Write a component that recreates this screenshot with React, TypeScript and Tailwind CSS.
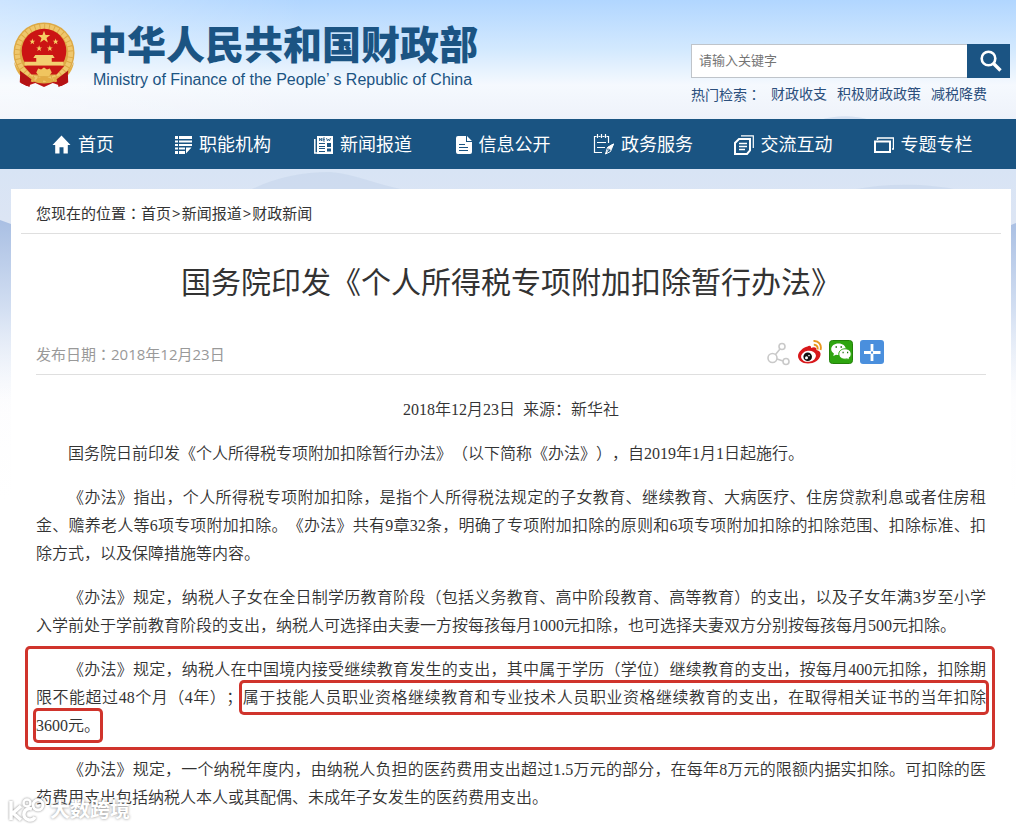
import type { ReactNode } from "react";

const svg = "mt-px shrink-0";

const HomeIcon = () => (
  <svg className={svg} width="19" height="19" viewBox="0 0 19 19" fill="#fff">
    <path d="M9.5 0.5 0.5 10h2.7v8.5h4.3v-6.300h4v6.300h4.300V10h2.700z" />
  </svg>
);

const ListIcon = () => (
  <svg className={svg} width="17" height="18" viewBox="0 0 17 18" fill="#fff">
    <path d="M0 0h3v3H0zM4 0h13v3H4zM0 4.500h3v2H0zM4 4.500h13v2H4zM0 8h3v2H0zM4 8h13v2H4zM0 11.500h3v2H0zM4 11.500h6v2H4zM0 15h3v3H0zM4 15h6v3H4zM11 11.500h5.500L11 17.500z" />
  </svg>
);

const NewsIcon = () => (
  <svg className={svg} width="19" height="18" viewBox="0 0 19 18">
    <path d="M.8 3v14h3" fill="none" stroke="#fff" strokeWidth="1.500" />
    <path d="M3 0h16v18H3z" fill="#fff" />
    <path d="M5.500 5V2l2 3V2M11 2H9v3h2M9 3.500h2M12.500 2l1 3 1-2 1 2 1-3" fill="none" stroke="#1a5482" strokeWidth="0.800" />
    <path d="M5 7.500h6M5 10.500h6M5 12.500h6M5 15.500h6" stroke="#1a5482" strokeWidth="1" />
    <path d="M13 7h4v4h-4zM13 12.500h4v3h-4z" fill="#1a5482" />
  </svg>
);

const FileIcon = () => (
  <svg className={svg} width="16" height="18" viewBox="0 0 16 18">
    <path d="M2 0h8v6h6v10a2 2 0 0 1-2 2H2a2 2 0 0 1-2-2V2a2 2 0 0 1 2-2zM11 0l5 5h-5z" fill="#fff" />
    <path d="M3 8.500h6M3 11.500h9M3 14.500h9" stroke="#1a5482" strokeWidth="1" />
  </svg>
);

const NoteIcon = () => (
  <svg className={svg} width="21" height="21" viewBox="0 0 21 21" fill="none" stroke="#fff">
    <path d="M1 2.500h2.500M5.500 2.500h2M9.500 2.500h2M13.500 2.500h2V9M1.500 2v16.500H9M4.500 0v4M8.500 0v4M12.500 0v4M4 8.500h9M4 13.500h8" strokeWidth="1.200" />
    <path d="M20.500 10l-6 3.500-2 6.500 5-2.500zM12.500 20l3-4.500" strokeWidth="1" />
    <path d="M20.500 10l-6 3.500 3 2z" fill="#fff" />
  </svg>
);

const PagesIcon = () => (
  <svg className={svg} width="20" height="20" viewBox="0 0 20 20" fill="none" stroke="#fff">
    <path d="M7 .8h12.300V13" strokeWidth="1.200" />
    <path d="M5 4h11v11.500L13 19H1V8z" strokeWidth="2" />
    <path d="M5 8.500h8M5 11.500h8M5 14.500h6" strokeWidth="1.500" />
  </svg>
);

const WindowsIcon = () => (
  <svg className={svg} width="20" height="16" viewBox="0 0 20 16" fill="none" stroke="#fff">
    <path d="M3.500 3V1h16v11H18" strokeWidth="1.400" />
    <path d="M1 4.500h15V15H1z" strokeWidth="2" />
  </svg>
);

const Emblem = () => (
  <svg width="64" height="68" viewBox="0 0 66 68" className="shrink-0">
    <path d="M9 44l48 0 1 18-7 4-9-3-9 4-9-4-9 3-7-4z" fill="#bd1416" />
    <circle cx="33" cy="32" r="31.500" fill="#dda945" />
    <circle cx="33" cy="32" r="27.500" fill="none" stroke="#efc76c" strokeWidth="5" strokeDasharray="4 1" />
    <circle cx="33" cy="30" r="23" fill="#cb1414" />
    <path d="M33 9l1.600 4.500h4.800l-3.800 2.900 1.400 4.600-4-2.800-4 2.800 1.400-4.600-3.800-2.900h4.800z" fill="#f6cf63" />
    <path
      d="M21 17l.8 2.200H24l-1.800 1.400.7 2.300-1.900-1.400-1.900 1.400.7-2.300-1.800-1.400h2.200zM45 17l.8 2.200H48l-1.800 1.400.7 2.300-1.900-1.400-1.900 1.400.7-2.300-1.800-1.400h2.200zM28 24l.8 2.200H31l-1.800 1.400.7 2.300-1.900-1.400-1.900 1.400.7-2.300-1.800-1.400h2.200zM39 24l.8 2.200H42l-1.800 1.400.7 2.300-1.900-1.400-1.900 1.400.7-2.300-1.800-1.400h2.200z"
      fill="#f6cf63"
    />
    <path d="M24 34h18l2 3h-3v4h12v4H13v-4h12v-4h-3z" fill="#f3cf70" />
    <path d="M12 45h42L46 54H20z" fill="#c81616" />
    <path d="M2 41c6 12 14 15 22 16l-2 5C12 60 4 54 2 41zM64 41c-6 12-14 15-22 16l2 5c10-2 18-8 20-21z" fill="#e3b04a" />
    <path d="M25 52l2-4 3 1 3-2 3 2 3-1 2 4-3 4H28z" fill="#f0c55f" />
    <path d="M8 50l12 9-2 8-9-4zM58 50l-12 9 2 8 9-4z" fill="#b51214" />
    <path d="M24 60c6-5 12-5 18 0l-5 3-4-3-4 3z" fill="#e3ac45" />
  </svg>
);

const ShareIcon = () => (
  <svg width="24" height="24" viewBox="0 0 24 24" fill="none" stroke="#c9c9c9" strokeWidth="1.600">
    <circle cx="5.500" cy="16" r="4.500" />
    <circle cx="15" cy="4.500" r="3" />
    <circle cx="19" cy="19.500" r="3" />
    <path d="M8.500 12.500L13 7M10 17l6 2" />
  </svg>
);

const WeiboIcon = () => (
  <svg width="24" height="24" viewBox="0 0 24 24">
    <path d="M9.500 6.500C11 5 13.500 5.500 13 8c3-1.300 6-.8 5.500 2 3 .7 4.500 2.500 4 5-.8 5-6.500 8.500-12.500 8.500S0 20 0 16C0 12.500 5 7 9.500 6.500z" fill="#d8181b" />
    <ellipse cx="10.500" cy="16.300" rx="7.500" ry="5.500" fill="#fff" transform="rotate(-8 10.500 16.300)" />
    <circle cx="9.700" cy="16.700" r="4.300" fill="#111" />
    <circle cx="8.500" cy="17.800" r="1.500" fill="#fff" />
    <circle cx="11" cy="15.600" r=".8" fill="#fff" />
    <path d="M15.500 1c5-.5 8.500 4 7 9M15.800 4.800c2.800-.2 4.400 2 3.700 4.700" fill="none" stroke="#e8981f" strokeWidth="1.900" />
  </svg>
);

const WechatIcon = () => (
  <svg width="24" height="24" viewBox="0 0 24 24">
    <rect x=".5" y=".5" width="23" height="23" rx="3" fill="#2ea50f" stroke="#238009" />
    <path d="M9.500 3.500c4.200 0 7.300 2.400 7.300 5.800 0 3.300-3.100 5.700-7.300 5.700-.9 0-1.700-.1-2.500-.3L4.300 16l.6-2.500C3.200 12.400 2.200 11 2.200 9.300c0-3.400 3.100-5.800 7.300-5.800z" fill="#fff" />
    <path d="M16 8.800c3.600 0 6.200 2.300 6.200 5.200 0 1.600-.8 3-2.200 3.900l.6 2.300-2.500-1.300c-.7.200-1.400.3-2.100.3-3.500 0-6.200-2.300-6.200-5.200s2.700-5.200 6.200-5.200z" fill="#fff" stroke="#2ea50f" />
    <path d="M6.500 7h1.500M11.500 7H13M13.500 12.500h1.200M18 12.500h1.200" stroke="#1d6b0a" strokeWidth="1.400" />
  </svg>
);

const PlusIcon = () => (
  <svg width="24" height="24" viewBox="0 0 24 24">
    <rect width="24" height="24" rx="3" fill="#4a8fdd" />
    <path d="M4 12.500h7M13 12.500h7.500M12 4v7.500M12 13.500V21" stroke="#fff" strokeWidth="2.800" />
  </svg>
);

const Sky = () => (
  <svg className="absolute inset-x-0 top-0 -z-10 h-[500px] w-full" viewBox="0 0 1016 500" preserveAspectRatio="none">
    <defs>
      <linearGradient id="sky" x2="0" y2="1">
        <stop offset="0" stopColor="#b1d6ff" />
        <stop offset=".1" stopColor="#d3e9fe" />
        <stop offset=".17" stopColor="#f5f9fe" />
        <stop offset=".22" stopColor="#f0f4fb" />
        <stop offset=".34" stopColor="#d8e4f5" />
        <stop offset=".44" stopColor="#dce5f4" />
        <stop offset=".8" stopColor="#fdfdfe" />
        <stop offset="1" stopColor="#fff" />
      </linearGradient>
      <linearGradient id="glow" x2="1" y2="0">
        <stop offset="0" stopColor="#fff" stopOpacity=".35" />
        <stop offset=".3" stopColor="#fff" stopOpacity="0" />
        <stop offset="1" stopColor="#fff" stopOpacity="0" />
      </linearGradient>
      <linearGradient id="hill" x2="0" y2="1">
        <stop offset="0" stopColor="#a9bfe3" />
        <stop offset=".45" stopColor="#d3dff2" />
        <stop offset="1" stopColor="#fff" stopOpacity="0" />
      </linearGradient>
    </defs>
    <path d="M0 0h1016v500H0z" fill="url(#sky)" />
    <path d="M0 0h1016v120H0z" fill="url(#glow)" />
    <path d="M250 190c25-12 50-18 80-18 25 2 45 12 75 18zM820 120c15-5 35-5 50 0zM850 190c40-8 80-6 110 0z" fill="#c6d5eb" opacity=".6" />
    <path d="M0 220l11 4v196H0zM1011 225l5-2v157h-5z" fill="url(#hill)" />
  </svg>
);

const navItems = [
  { label: "首页", Icon: HomeIcon },
  { label: "职能机构", Icon: ListIcon },
  { label: "新闻报道", Icon: NewsIcon },
  { label: "信息公开", Icon: FileIcon },
  { label: "政务服务", Icon: NoteIcon },
  { label: "交流互动", Icon: PagesIcon },
  { label: "专题专栏", Icon: WindowsIcon },
];

const hotWords = ["财政收支", "积极财政政策", "减税降费"];

// full-width colon, centred in its cell
const Colon = () => <span className="font-['Noto_Sans_CJK_TC',sans-serif]">：</span>;

function Header() {
  return (
    <header className="flex h-[119px] items-start justify-between pl-3 pr-[6px]">
      <div className="flex">
        <div className="pt-[21px]">
          <Emblem />
        </div>
        <div className="pl-3 pt-[18px] text-[#1b5483]">
          <h1 className="whitespace-nowrap font-['Noto_Sans_CJK_SC',sans-serif] text-[39px] font-black leading-[48px]">
            中华人民共和国财政部
          </h1>
          <p className="mt-1 whitespace-nowrap pl-[5px] font-['Liberation_Sans',sans-serif] text-base leading-5">
            Ministry of Finance of the People’ s Republic of China
          </p>
        </div>
      </div>
      <div className="w-[319px] pt-11">
        <form className="flex h-[34px]">
          <input
            type="text"
            aria-label="请输入关键字"
            placeholder="请输入关键字"
            className="min-w-0 flex-1 border border-r-0 border-[#bfc4ca] bg-white px-[7px] text-[13px] placeholder:text-[#757575]"
          />
          <button type="button" aria-label="搜索" className="flex w-[43px] items-center justify-center bg-[#1b5483]">
            <svg width="22" height="22" viewBox="0 0 22 22" fill="none" stroke="#fff" className="ml-1">
              <circle cx="8.500" cy="8.500" r="6.800" strokeWidth="2.600" />
              <path d="M13.500 13.500l7 7" strokeWidth="3.400" />
            </svg>
          </button>
        </form>
        <div className="flex gap-[10px] pt-1.5 text-sm leading-5 text-[#2b4f7c]">
          <span>热门检索<Colon /></span>
          {hotWords.map((word) => (
            <a key={word} href="#">{word}</a>
          ))}
        </div>
      </div>
    </header>
  );
}

function Nav() {
  return (
    <nav className="flex h-[50px] bg-[#1a5482] pl-[13px] pr-[23px]">
      {navItems.map(({ label, Icon }) => (
        <a key={label} href="#" className="flex flex-1 items-center justify-center gap-[7px] text-lg leading-[48px] text-white">
          <Icon />
          {label}
        </a>
      ))}
    </nav>
  );
}

const Mark = ({ children }: { children: ReactNode }) => (
  <span className="rounded-xs py-1.5 ring-3 ring-[#d0342c]">{children}</span>
);

function Article() {
  return (
    <main className="mx-auto w-full max-w-[1000px] bg-white px-[10px]">
      <div className="h-[45px] border-b border-[#dfdfdf] px-[15px] pt-[2px] text-[15px] leading-[44px] text-[#333]">
        您现在的位置<Colon /><a href="#">首页</a>
        <span className="mx-px">&gt;</span>
        <a href="#">新闻报道</a>
        <span className="mx-px">&gt;</span>
        <a href="#">财政新闻</a>
      </div>
      <div className="px-[15px]">
        <h2 className="pt-[26px] text-center text-3xl leading-[44px] text-[#333] [text-spacing-trim:space-all]">
          国务院印发《个人所得税专项附加扣除暂行办法》
        </h2>
        <div className="flex h-[71px] items-center border-b border-[#dfdfdf] pt-[26px] text-[15px] leading-[36px] text-[#999]">
          <span className="pt-1">发布日期<Colon />2018年12月23日</span>
          <div className="ml-auto mr-[102px] flex gap-[7px]">
            <button type="button" aria-label="分享" className="pt-1"><ShareIcon /></button>
            <button type="button" aria-label="微博"><WeiboIcon /></button>
            <button type="button" aria-label="微信"><WechatIcon /></button>
            <button type="button" aria-label="更多"><PlusIcon /></button>
          </div>
        </div>
        <div className="space-y-4 pt-[21px] text-justify indent-8 font-['Liberation_Serif','Noto_Sans_CJK_SC',serif] text-base leading-7 font-[350] text-[#333] [text-spacing-trim:space-all]">
          <p className="text-center indent-0">2018年12月23日&nbsp; 来源：新华社</p>
          <p>国务院日前印发《个人所得税专项附加扣除暂行办法》（以下简称《办法》），自2019年1月1日起施行。</p>
          <p>
            《办法》指出，个人所得税专项附加扣除，是指个人所得税法规定的子女教育、继续教育、大病医疗、住房贷款利息或者住房租金、赡养老人等6项专项附加扣除。《办法》共有9章32条，明确了专项附加扣除的原则和6项专项附加扣除的扣除范围、扣除标准、扣除方式，以及保障措施等内容。
          </p>
          <p>
            《办法》规定，纳税人子女在全日制学历教育阶段（包括义务教育、高中阶段教育、高等教育）的支出，以及子女年满3岁至小学入学前处于学前教育阶段的支出，纳税人可选择由夫妻一方按每孩每月1000元扣除，也可选择夫妻双方分别按每孩每月500元扣除。
          </p>
          <div className="-mt-[7px] -mr-1.5 mb-[9px] -ml-2 rounded-xs py-[7px] pr-1.5 pl-2 ring-3 ring-[#d0342c]">
            <p>
              《办法》规定，纳税人在中国境内接受继续教育发生的支出，其中属于学历（学位）继续教育的支出，按每月400元扣除，扣除期限不能超过48个月（4年）；<Mark>属于技能人员职业资格继续教育和专业技术人员职业资格继续教育的支出，在取得相关证书的当年扣除</Mark><Mark>3600元。</Mark>
            </p>
          </div>
          <p>
            《办法》规定，一个纳税年度内，由纳税人负担的医药费用支出超过1.5万元的部分，在每年8万元的限额内据实扣除。可扣除的医药费用支出包括纳税人本人或其配偶、未成年子女发生的医药费用支出。
          </p>
        </div>
      </div>
    </main>
  );
}

function Watermark() {
  return (
    <div className="absolute bottom-1 left-2 flex items-center gap-1 text-xl leading-7 font-bold text-white [text-shadow:0_0_3px_#888]">
      <svg width="38" height="26" viewBox="0 0 38 26" fill="none" className="drop-shadow-[0_0_1px_#888]">
        <path d="M3 4v19M13 9l-8 7 8 7M24 12c-8-3-12 9-3 11 3 .5 5-1 6-3" stroke="#fff" strokeWidth="3.500" />
        <circle cx="19" cy="6" r="3.500" stroke="#fff" strokeWidth="2.500" />
        <circle cx="30" cy="8" r="5" stroke="#fff" strokeWidth="3" />
      </svg>
      大数跨境
    </div>
  );
}

export default function App() {
  return (
    <div className="relative isolate min-h-screen overflow-hidden pb-4 font-['Open_Sans','Noto_Sans_CJK_SC',sans-serif]">
      <Sky />
      <Header />
      <Nav />
      <div className="pt-5 pr-[5px] pl-[11px]">
        <Article />
      </div>
      <Watermark />
    </div>
  );
}
